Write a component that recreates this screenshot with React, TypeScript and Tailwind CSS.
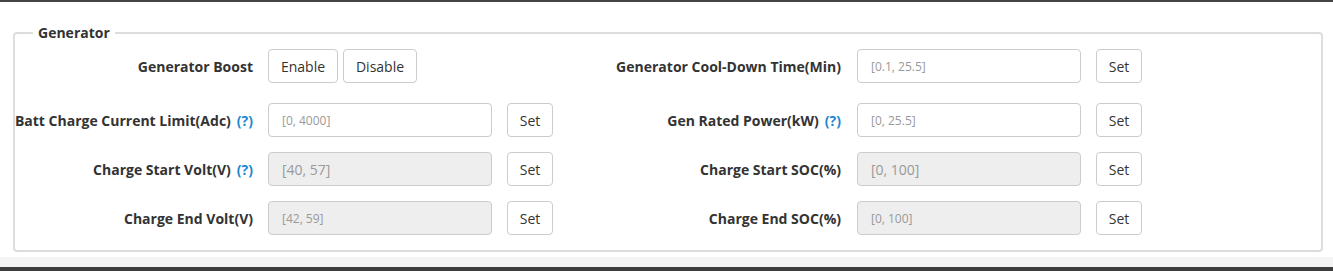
const font = { fontFamily: '"Open Sans", "Noto Sans", sans-serif' }

type Field = {
  label: string
  help?: boolean
  hint?: string
  disabled?: boolean
  big?: boolean
}

const Label = ({ label, help }: { label: string; help?: boolean }) => (
  <div className="w-[238px] shrink-0 flex justify-end items-center whitespace-nowrap text-[14px] font-bold text-[#333]">
    <span>{label}</span>
    {help && <span className="ml-[6px] text-[#1e88d0]">(?)</span>}
  </div>
)

const InputCell = ({ f, right }: { f: Field; right?: boolean }) => (
  <div className="flex items-center">
    <Label label={f.label} help={f.help} />
    <input
      disabled={f.disabled}
      placeholder={f.hint}
      className={
        "w-[224px] h-[34px] px-[13px] rounded-[4px] border border-[#ccc] outline-none placeholder:text-[#999] " +
        (right ? "ml-[16px] " : "ml-[15px] ") +
        (f.big ? "text-[14px] " : "text-[12px] ") +
        (f.disabled ? "bg-[#eee]" : "bg-white")
      }
    />
    <button className="ml-[15px] w-[46px] h-[34px] rounded-[4px] border border-[#ccc] bg-white text-[14px] text-[#333]">
      Set
    </button>
  </div>
)

const rows: Field[][] = [
  [
    { label: "Batt Charge Current Limit(Adc)", help: true, hint: "[0, 4000]" },
    { label: "Gen Rated Power(kW)", help: true, hint: "[0, 25.5]" },
  ],
  [
    { label: "Charge Start Volt(V)", help: true, hint: "[40, 57]", disabled: true, big: true },
    { label: "Charge Start SOC(%)", hint: "[0, 100]", disabled: true, big: true },
  ],
  [
    { label: "Charge End Volt(V)", hint: "[42, 59]", disabled: true },
    { label: "Charge End SOC(%)", hint: "[0, 100]", disabled: true },
  ],
]

export default function App() {
  return (
    <div className="w-[1333px] h-[271px] flex flex-col bg-white text-[#333]" style={font}>
      <div className="h-[2px] bg-[#444]" />
      <div className="flex-1 px-[13px] pt-[21px]">
        <fieldset className="w-[1310px] border-2 border-[#ddd] rounded-[4px] pb-[15px]">
          <legend className="ml-[18px] px-[5px] text-[14px] font-bold leading-[20px] text-[#333]">Generator</legend>
          <div className="grid grid-cols-[588px_1fr] mt-[6px]">
            <div className="flex items-center">
              <Label label="Generator Boost" />
              <button className="ml-[15px] w-[70px] h-[34px] rounded-[4px] border border-[#ccc] bg-white text-[14px] text-[#333]">
                Enable
              </button>
              <button className="ml-[5px] w-[74px] h-[34px] rounded-[4px] border border-[#ccc] bg-white text-[14px] text-[#333]">
                Disable
              </button>
            </div>
            <InputCell right f={{ label: "Generator Cool-Down Time(Min)", hint: "[0.1, 25.5]" }} />
          </div>
          {rows.map((r, i) => (
            <div key={i} className={"grid grid-cols-[588px_1fr] " + (i === 0 ? "mt-[20px]" : "mt-[15px]")}>
              <InputCell f={r[0]} />
              <InputCell right f={r[1]} />
            </div>
          ))}
        </fieldset>
      </div>
      <div className="h-[10px] bg-[#f3f3f3]" />
      <div className="h-[4px] bg-[#3d3d3d]" />
    </div>
  )
}
